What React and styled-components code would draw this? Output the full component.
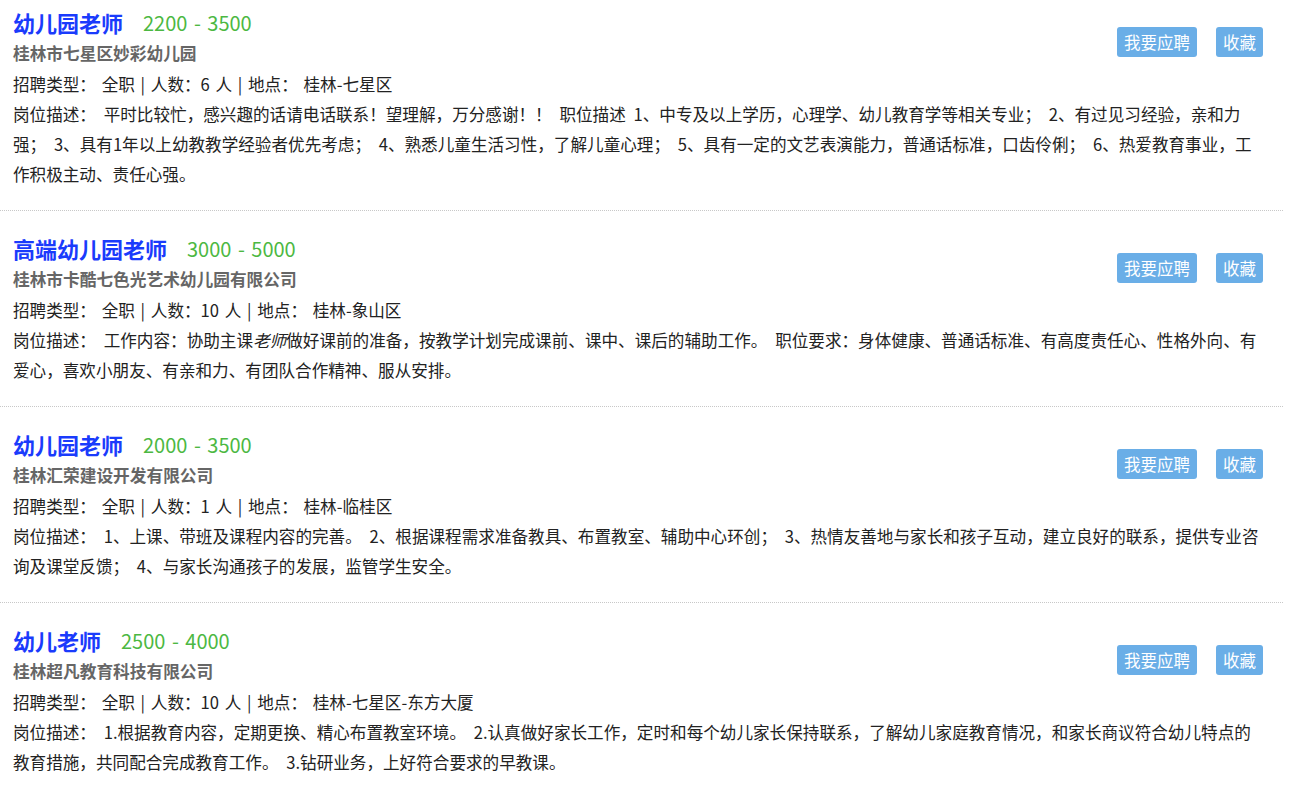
import React from 'react'
import styled, { createGlobalStyle } from 'styled-components'

const GlobalStyle = createGlobalStyle`
  body {
    margin: 0;
    background: #fff;
    font-family: "Noto Sans CJK SC", "Noto Sans", sans-serif;
    color: #333;
  }
`

const List = styled.div`
  width: 1283px;
`

const Card = styled.div`
  padding: 22px 20px 21px 13px;
  border-bottom: 1px dotted #c8c8c8;
  &:first-child {
    padding-top: 7px;
  }
`

const Head = styled.div`
  display: flex;
  justify-content: space-between;
  align-items: flex-start;
`

const Info = styled.div`
  display: flex;
  flex-direction: column;
`

const TitleRow = styled.div`
  display: flex;
  align-items: center;
  height: 30px;
  gap: 20px;
`

const Title = styled.span`
  font-size: 22px;
  font-weight: bold;
  color: #1a3bfc;
`

const Salary = styled.span`
  font-size: 20px;
  color: #4cb842;
  word-spacing: 2px;
`

const Company = styled.div`
  font-size: 16.7px;
  font-weight: bold;
  color: #666;
  line-height: 32px;
`

const Meta = styled.div`
  font-size: 16.6px;
  line-height: 30px;
  color: #222;
  white-space: pre;
  word-spacing: 2px;
`

const Actions = styled.div`
  display: flex;
  gap: 19px;
  margin-top: 20px;
`

const Button = styled.button`
  height: 30px;
  padding: 0 7px;
  border: none;
  border-radius: 3px;
  background: #6aaee7;
  color: #fff;
  font-family: inherit;
  font-size: 16.5px;
  cursor: pointer;
`

const Desc = styled.p`
  margin: 0;
  font-size: 16.6px;
  line-height: 30px;
  color: #222;
  word-spacing: 4px;
`

const jobs = [
  {
    title: '幼儿园老师',
    salary: '2200 - 3500',
    company: '桂林市七星区妙彩幼儿园',
    count: '6',
    place: '桂林-七星区',
    desc: '平时比较忙，感兴趣的话请电话联系！望理解，万分感谢！！ 职位描述 1、中专及以上学历，心理学、幼儿教育学等相关专业； 2、有过见习经验，亲和力强； 3、具有1年以上幼教教学经验者优先考虑； 4、熟悉儿童生活习性，了解儿童心理； 5、具有一定的文艺表演能力，普通话标准，口齿伶俐； 6、热爱教育事业，工作积极主动、责任心强。',
  },
  {
    title: '高端幼儿园老师',
    salary: '3000 - 5000',
    company: '桂林市卡酷七色光艺术幼儿园有限公司',
    count: '10',
    place: '桂林-象山区',
    desc: (
      <>
        工作内容：协助主课<i>老师</i>做好课前的准备，按教学计划完成课前、课中、课后的辅助工作。 职位要求：身体健康、普通话标准、有高度责任心、性格外向、有爱心，喜欢小朋友、有亲和力、有团队合作精神、服从安排。
      </>
    ),
  },
  {
    title: '幼儿园老师',
    salary: '2000 - 3500',
    company: '桂林汇荣建设开发有限公司',
    count: '1',
    place: '桂林-临桂区',
    desc: '1、上课、带班及课程内容的完善。 2、根据课程需求准备教具、布置教室、辅助中心环创； 3、热情友善地与家长和孩子互动，建立良好的联系，提供专业咨询及课堂反馈； 4、与家长沟通孩子的发展，监管学生安全。',
  },
  {
    title: '幼儿老师',
    salary: '2500 - 4000',
    company: '桂林超凡教育科技有限公司',
    count: '10',
    place: '桂林-七星区-东方大厦',
    desc: '1.根据教育内容，定期更换、精心布置教室环境。 2.认真做好家长工作，定时和每个幼儿家长保持联系，了解幼儿家庭教育情况，和家长商议符合幼儿特点的教育措施，共同配合完成教育工作。 3.钻研业务，上好符合要求的早教课。',
  },
]

const App = () => {
  return (
    <>
      <GlobalStyle />
      <List>
        {jobs.map((job, i) => (
          <Card key={i}>
            <Head>
              <Info>
                <TitleRow>
                  <Title>{job.title}</Title>
                  <Salary>{job.salary}</Salary>
                </TitleRow>
                <Company>{job.company}</Company>
                <Meta>
                  {`招聘类型： 全职 | 人数：${job.count} 人 | 地点： ${job.place}`}
                </Meta>
              </Info>
              <Actions>
                <Button>我要应聘</Button>
                <Button>收藏</Button>
              </Actions>
            </Head>
            <Desc>岗位描述： {job.desc}</Desc>
          </Card>
        ))}
      </List>
    </>
  )
}

export default App
